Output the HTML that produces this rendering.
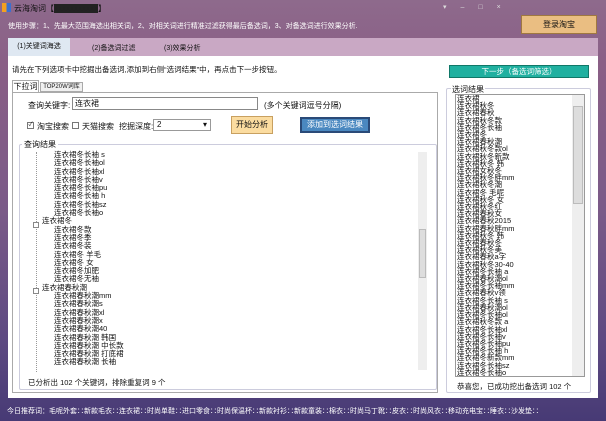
<!DOCTYPE html>
<html><head><meta charset="utf-8"><style>
*{margin:0;padding:0;box-sizing:border-box}
body{width:606px;height:421px;overflow:hidden;font-family:"Liberation Sans","Noto Sans CJK SC",sans-serif;font-size:8px;color:#111;position:relative;background:linear-gradient(180deg,#8e6a8c 0%,#8a5f86 15%,#7a5a88 50%,#5e4a82 80%,#473a75 100%)}
.a{position:absolute;white-space:nowrap}
.w{color:#fff}
</style></head><body>
<div class="a" style="left:2px;top:3px;width:9px;height:9px;background:linear-gradient(90deg,#f4a020 50%,#3a70d0 50%)"></div>
<div class="a" style="left:14px;top:3px;font-size:8px;color:#111">云海淘词【<span style="background:#222;color:#222">xxxxxxxxxxx</span>】</div>
<div class="a" style="left:443px;top:3px;color:#ddd;font-size:7px;letter-spacing:14px">▾–□×</div>
<div class="a" style="left:8px;top:21px;color:#fff;font-size:7px">使用步骤：1、先最大范围海选出相关词，2、对相关词进行精准过滤获得最后备选词，3、对备选词进行效果分析.</div>
<div class="a" style="left:521px;top:15px;width:76px;height:19px;background:#eabe82;border:1px solid #a07840;text-align:center;line-height:17px">登录淘宝</div>
<div class="a" style="left:8px;top:38px;width:590px;height:18px;background:#c9a8c4"></div>
<div class="a" style="left:8px;top:38px;width:62px;height:18px;background:#dfe8f2;text-align:center;line-height:18px;font-size:7px">(1)关键词海选</div>
<div class="a" style="left:92px;top:43px;font-size:7px">(2)备选词过滤</div>
<div class="a" style="left:164px;top:43px;font-size:7px">(3)效果分析</div>
<div class="a" style="left:8px;top:56px;width:590px;height:342px;background:#fff"></div>
<div class="a" style="left:12px;top:64px;font-size:7.5px">请先在下列选项卡中挖掘出备选词,添加到右侧“选词结果”中，再点击下一步按钮。</div>
<div class="a" style="left:449px;top:65px;width:140px;height:13px;background:#20b0a0;border:1px solid #107868;color:#fff;text-align:center;line-height:11px;font-size:7.5px">下一步（备选词筛选）</div>
<div class="a" style="left:12px;top:80px;width:27px;height:12px;border:1px solid #aaa;border-bottom:none;background:#fff;text-align:center;line-height:11px">下拉词</div>
<div class="a" style="left:40px;top:82px;width:43px;height:10px;border:1px solid #aaa;background:#f0f0f0;text-align:center;line-height:9px;font-size:6px">TOP20W词库</div>
<div class="a" style="left:12px;top:92px;width:426px;height:301px;border:1px solid #aaa"></div>
<div class="a" style="left:28px;top:100px">查询关键字:</div>
<div class="a" style="left:72px;top:97px;width:186px;height:13px;border:1px solid #888;padding-left:2px;line-height:11px">连衣裙</div>
<div class="a" style="left:264px;top:100px">(多个关键词逗号分隔)</div>
<div class="a" style="left:27px;top:122px;width:7px;height:7px;border:1px solid #777;font-size:6px;line-height:5px;text-align:center">✓</div>
<div class="a" style="left:37px;top:121px">淘宝搜索</div>
<div class="a" style="left:72px;top:122px;width:7px;height:7px;border:1px solid #777"></div>
<div class="a" style="left:82px;top:121px">天猫搜索</div>
<div class="a" style="left:119px;top:121px">挖掘深度:</div>
<div class="a" style="left:153px;top:119px;width:58px;height:12px;border:1px solid #999;padding-left:3px;line-height:10px">2<span style="position:absolute;right:3px">▾</span></div>
<div class="a" style="left:231px;top:116px;width:42px;height:18px;background:#fbdca0;border:1px solid #c8a060;text-align:center;line-height:16px">开始分析</div>
<div class="a" style="left:300px;top:117px;width:70px;height:16px;background:#4a88c0;border:2px solid #2a4a78;color:#fff;text-align:center;line-height:12px">添加到选词结果</div>
<div class="a" style="left:19px;top:144px;width:418px;height:246px;border:1px solid #ccd;border-radius:2px"></div>
<div class="a" style="left:22px;top:139px;background:#fff;padding:0 2px">查询结果</div>
<div class="a" style="left:418px;top:152px;width:9px;height:218px;background:#eee"></div>
<div class="a" style="left:419px;top:229px;width:7px;height:49px;background:#ddd;border:1px solid #bbb"></div>
<div class="a" style="left:36px;top:152px;width:1px;height:220px;border-left:1px dotted #999"></div>
<div class="a" style="left:54px;top:151px;line-height:8.3px;font-size:7.5px">连衣裙冬长袖 s<br>连衣裙冬长袖ol<br>连衣裙冬长袖xl<br>连衣裙冬长袖v<br>连衣裙冬长袖pu<br>连衣裙冬长袖 h<br>连衣裙冬长袖sz<br>连衣裙冬长袖o<br><span style="margin-left:-12px">连衣裙冬</span><br>连衣裙冬款<br>连衣裙冬季<br>连衣裙冬装<br>连衣裙冬 羊毛<br>连衣裙冬 女<br>连衣裙冬加肥<br>连衣裙冬无袖<br><span style="margin-left:-12px">连衣裙春秋潮</span><br>连衣裙春秋潮mm<br>连衣裙春秋潮s<br>连衣裙春秋潮xl<br>连衣裙春秋潮x<br>连衣裙春秋潮40<br>连衣裙春秋潮 韩国<br>连衣裙春秋潮 中长款<br>连衣裙春秋潮 打底裙<br>连衣裙春秋潮 长袖</div>
<div class="a" style="left:33px;top:222px;width:6px;height:6px;border:1px solid #888;background:#fff"></div>
<div class="a" style="left:33px;top:288px;width:6px;height:6px;border:1px solid #888;background:#fff"></div>
<div class="a" style="left:28px;top:377px;font-size:7.5px">已分析出 102 个关键词，排除重复词 9 个</div>
<div class="a" style="left:446px;top:88px;width:145px;height:305px;border:1px solid #ccd;border-radius:2px"></div>
<div class="a" style="left:451px;top:84px;background:#fff;padding:0 1px">选词结果</div>
<div class="a" style="left:455px;top:94px;width:130px;height:283px;border:1px solid #999;overflow:hidden"></div>
<div class="a" style="left:572px;top:95px;width:12px;height:281px;background:#eee"></div>
<div class="a" style="left:573px;top:106px;width:10px;height:98px;background:#ddd;border:1px solid #bbb"></div>
<div class="a" style="left:457px;top:95px;line-height:7.2px;font-size:7.5px;height:281px;overflow:hidden">连衣裙<br>连衣裙秋冬<br>连衣裙春秋<br>连衣裙秋冬款<br>连衣裙冬长袖<br>连衣裙冬<br>连衣裙春秋潮<br>连衣裙秋冬款ol<br>连衣裙秋冬新款<br>连衣裙秋冬 韩<br>连衣裙女秋冬<br>连衣裙秋冬胖mm<br>连衣裙秋冬潮<br>连衣裙冬 毛呢<br>连衣裙秋冬 女<br>连衣裙秋冬红<br>连衣裙春秋女<br>连衣裙春秋2015<br>连衣裙春秋胖mm<br>连衣裙秋冬 韩<br>连衣裙春秋冬<br>连衣裙秋冬美<br>连衣裙春秋a字<br>连衣裙秋冬30-40<br>连衣裙冬长袖 a<br>连衣裙春秋潮ol<br>连衣裙冬长袖mm<br>连衣裙春秋v领<br>连衣裙冬长袖 s<br>连衣裙春秋潮ol<br>连衣裙冬长袖ol<br>连衣裙秋冬款 a<br>连衣裙冬长袖xl<br>连衣裙冬长袖v<br>连衣裙冬长袖pu<br>连衣裙冬长袖 h<br>连衣裙冬新款mm<br>连衣裙冬长袖sz<br>连衣裙冬长袖o</div>
<div class="a" style="left:457px;top:381px;font-size:7.5px">恭喜您，已成功挖出备选词 102 个</div>
<div class="a" style="left:7px;top:406px;color:#fff;font-size:7px">今日推荐词：毛呢外套∷新款毛衣∷连衣裙∷时尚单鞋∷进口零食∷时尚保温杯∷新款衬衫∷新款童装∷棉衣∷时尚马丁靴∷皮衣∷时尚风衣∷移动充电宝∷睡衣∷沙发垫∷</div>
</body></html>
